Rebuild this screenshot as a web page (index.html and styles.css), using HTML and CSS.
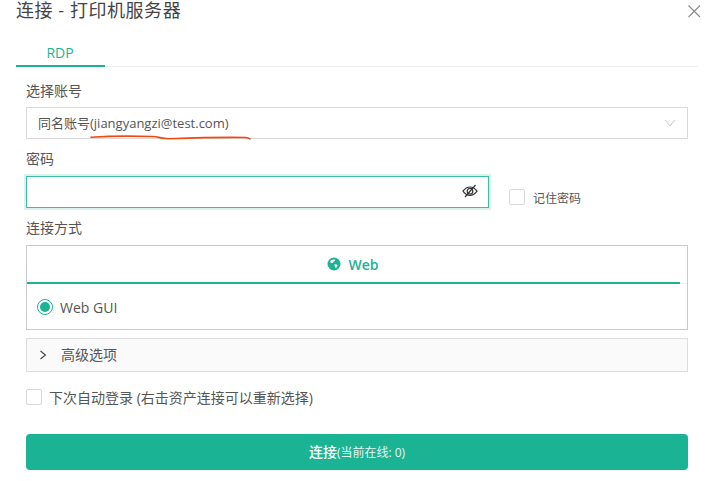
FILE: index.html
```html
<!DOCTYPE html>
<html lang="zh">
<head>
<meta charset="utf-8">
<title>连接 - 打印机服务器</title>
<link rel="stylesheet" href="styles.css">
</head>
<body>
<div class="dialog">
  <header class="head">
    <h1 class="title">连接 - 打印机服务器</h1>
    <svg class="close" width="14" height="14" viewBox="0 0 14 14"><path d="M1.5 1.5l11.5 11.5M13 1.5L1.5 13" fill="none" stroke="#8a8a8a" stroke-width="1.1"/></svg>
  </header>
  <nav class="tabs"><span class="tab">RDP</span></nav>
  <main class="form">
    <label class="label l-account">选择账号</label>
    <div class="select">
      <span class="select-text">同名账号(jiangyangzi@test.com)</span>
      <svg class="chev" width="12" height="8" viewBox="0 0 12 8"><path d="M1 1l5 6 5-6" fill="none" stroke="#c8c8c8" stroke-width="1"/></svg>
      <svg class="scribble" width="162" height="8" viewBox="0 0 162 8"><path d="M1 3.2C20 2 46 2 62 2.500c8 .3 9 2.500 18 2.200 20-.7 48-1.600 76-1.200 2 .1 3 .7 4 1.500" fill="none" stroke="#f04a12" stroke-width="1.600" stroke-linecap="round"/></svg>
    </div>
    <label class="label l-pass">密码</label>
    <div class="pass-row">
      <div class="input">
        <svg class="eye" width="16" height="14" viewBox="0 0 16 14"><path d="M1 7.200C3 4.400 5.400 3 8 3s5 1.400 7 4.200C13 10 10.600 11.400 8 11.400S3 10 1 7.200z" fill="none" stroke="#333" stroke-width="1.200"/><circle cx="8" cy="7.200" r="2.800" fill="none" stroke="#333" stroke-width="1.200"/><path d="M3 13L13.500 1" stroke="#333" stroke-width="1.200"/></svg>
      </div>
      <span class="check check-remember"></span>
      <span class="remember">记住密码</span>
    </div>
    <label class="label l-method">连接方式</label>
    <section class="method">
      <div class="method-tab">
        <svg class="globe" width="14" height="14" viewBox="0 0 14 14"><circle cx="7" cy="7" r="6.500" fill="#1ab394"/><path d="M4 3.200c1.500-.8 3-1 4.200-.5.300 1-.7 1.500-1.500 2-.6.400-.5 1.300-1.300 1.400-.9.100-1.800-.5-2.300-1.200.2-.6.500-1.200.9-1.700zM7.500 7.500c1-.4 2.200-.2 3 .5.100.9-.6 2.200-1.500 2.900-.8-.3-1.100-1.200-1.200-1.900-.1-.6-.5-1-.3-1.500z" fill="#fff"/></svg>
        <span>Web</span>
      </div>
      <div class="method-line"><span class="method-bar"></span></div>
      <div class="method-body">
        <span class="radio"><span class="radio-dot"></span></span>
        <span class="radio-text">Web GUI</span>
      </div>
    </section>
    <div class="advanced">
      <svg width="8" height="10" viewBox="0 0 8 10"><path d="M1.500 1l5 4-5 4" fill="none" stroke="#444" stroke-width="1.100"/></svg>
      <span class="advanced-text">高级选项</span>
    </div>
    <div class="auto">
      <span class="check"></span>
      <span>下次自动登录 (右击资产连接可以重新选择)</span>
    </div>
    <button class="connect" type="button"><b>连接</b><small>(当前在线: 0)</small></button>
  </main>
</div>
</body>
</html>
```
FILE: styles.css
```css
* { box-sizing: border-box; }
html, body { margin: 0; padding: 0; background: #fff; }
body {
  width: 715px;
  height: 481px;
  overflow: hidden;
  font-family: "Open Sans", "Noto Sans CJK SC", sans-serif;
  color: #555;
  font-size: 14px;
}
.dialog { padding: 0 17px 0 16px; }
.head {
  height: 21px;
  display: flex;
  justify-content: space-between;
  align-items: center;
}
.title {
  margin: 0;
  font-size: 18px;
  letter-spacing: 0.55px;
  line-height: 21px;
  font-weight: 400;
  color: #444;
}
.close { margin-right: -3px; }
.tabs {
  margin-top: 20px;
  height: 26px;
  border-bottom: 1px solid #eee;
  display: flex;
}
.tab {
  width: 89px;
  height: 26px;
  padding-right: 1px;
  text-align: center;
  color: #1ab394;
  font-size: 14px;
  line-height: 24px;
  border-bottom: 2px solid #1ab394;
}
.form { padding: 0 10px; }
.label {
  display: block;
  font-size: 14px;
  line-height: 18px;
  color: #555;
}
.l-account { margin-top: 15px; }
.l-pass { margin-top: 12px; }
.l-method { margin-top: 12px; }
.l-pass, .l-method { position: relative; top: -1px; }
.select {
  position: relative;
  margin-top: 7px;
  height: 32px;
  border: 1px solid #d9d9d9;
  display: flex;
  align-items: center;
  justify-content: space-between;
  padding: 0 11px;
  color: #555;
  font-size: 13px;
}
.select-text { margin-top: -2px; }
.scribble { position: absolute; left: 63px; top: 26px; }
.pass-row {
  margin-top: 7px;
  display: flex;
  align-items: center;
  height: 32px;
}
.input {
  width: 463px;
  height: 32px;
  border: 1px solid #3cbd9f;
  box-shadow: 0 0 0 2px #d9f3ec;
  display: flex;
  align-items: center;
  justify-content: flex-end;
  padding: 0 10px;
}
.eye { margin-top: -2px; }
.check {
  display: block;
  width: 16px;
  height: 16px;
  flex: none;
  border: 1px solid #d9d9d9;
  border-radius: 2px;
  background: #fff;
}
.check-remember { margin: 10px 0 0 20px; }
.remember { margin: 12px 0 0 8px; font-size: 12px; color: #555; }
.method {
  margin-top: 7px;
  height: 85px;
  border: 1px solid #cacaca;
}
.method-tab {
  height: 36px;
  display: flex;
  align-items: center;
  justify-content: center;
  gap: 7px;
  padding-right: 8px;
  color: #1ab394;
  font-size: 14px;
  font-weight: 600;
}
.method-line {
  height: 2px;
  background: linear-gradient(#fff 50%, #eee 50%);
}
.method-bar { display: block; width: 653px; height: 2px; background: #1ab394; }
.method-body {
  height: 45px;
  display: flex;
  align-items: center;
  padding-left: 10px;
  gap: 7px;
}
.radio {
  width: 16px;
  height: 16px;
  border: 1px solid #1ab394;
  border-radius: 50%;
  display: flex;
  align-items: center;
  justify-content: center;
}
.radio-dot { width: 10px; height: 10px; border-radius: 50%; background: #1ab394; }
.radio-text { margin-top: 2px; font-size: 14px; color: #555; }
.advanced {
  margin-top: 8px;
  height: 34px;
  border: 1px solid #ddd;
  background: #fafafa;
  display: flex;
  align-items: center;
  padding-left: 12px;
  gap: 14px;
  font-size: 14px;
  color: #555;
}
.advanced-text { margin-top: -2px; }
.auto {
  margin-top: 17px;
  height: 16px;
  display: flex;
  align-items: center;
  gap: 7px;
  font-size: 14px;
  color: #555;
}
.connect {
  display: block;
  margin-top: 29px;
  width: 100%;
  height: 36px;
  border: 0;
  border-radius: 4px;
  background: #1ab394;
  color: #fff;
  font-family: inherit;
  padding: 0;
  line-height: 36px;
}
.connect b { font-size: 14px; font-weight: 500; }
.connect small { font-size: 12px; color: #e4f5f1; }
```
